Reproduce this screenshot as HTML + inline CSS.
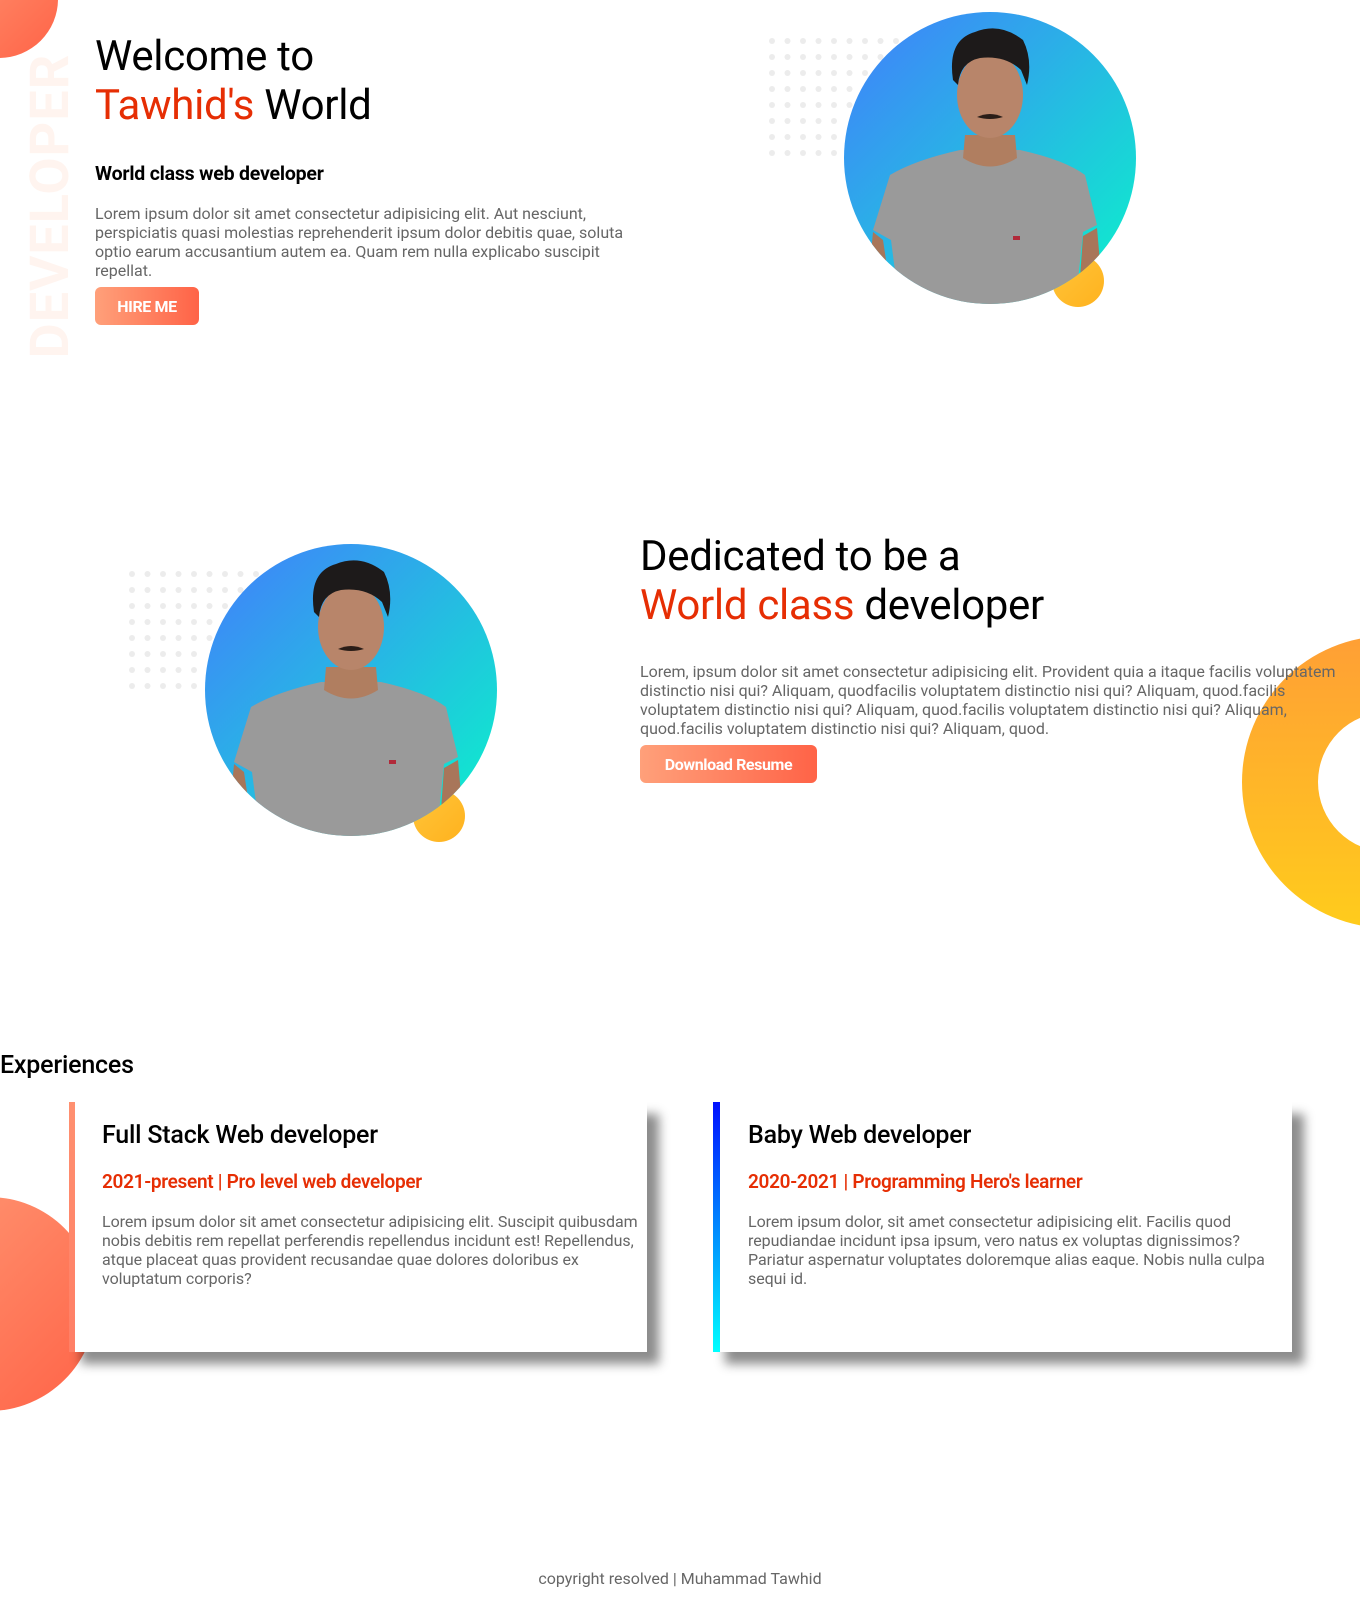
<!DOCTYPE html>
<html><head><meta charset="utf-8"><style>
*{margin:0;padding:0;box-sizing:border-box}
body{width:1360px;height:1604px;position:relative;overflow:hidden;background:#fff;font-family:"Roboto","Liberation Sans",sans-serif;color:#000}
.abs{position:absolute}
h1{font-weight:400;font-size:42px;line-height:49px;letter-spacing:-0.3px;white-space:nowrap}
.red{color:#e62e04}
p.t{color:#666;font-size:16px;line-height:19px;white-space:nowrap;letter-spacing:0}
.btn{background:linear-gradient(90deg,#ffa07a,#ff6347);color:#fff;font-weight:700;font-size:16px;border-radius:6px;display:flex;align-items:center;justify-content:center;letter-spacing:-0.4px}
.card{background:#fff;box-shadow:12px 12px 10px rgba(0,0,0,0.45)}
.card h2{font-weight:500;font-size:25px;position:absolute;left:27px;top:19px;letter-spacing:-0.2px}
.card h3{font-weight:600;font-size:19px;color:#e62e04;position:absolute;left:27px;top:68px;letter-spacing:-0.3px}
.card p{position:absolute;left:27px;top:110px;letter-spacing:-0.05px}
</style></head><body>

<div class="abs" style="left:-60px;top:-60px;width:118px;height:118px;border-radius:50%;background:linear-gradient(135deg,#ff9a76,#ff6347)"></div>
<div class="abs" style="left:-104px;top:176px;width:310px;height:60px;transform:rotate(-90deg);font-weight:700;font-size:54px;color:#fff4ef;letter-spacing:1px;line-height:60px;text-align:center">DEVELOPER</div>

<h1 class="abs" style="left:95px;top:32px">Welcome to<br><span class="red">Tawhid's</span> World</h1>
<div class="abs" style="left:95px;top:162px;font-weight:700;font-size:19.5px;letter-spacing:-0.2px">World class web developer</div>
<p class="t abs" style="left:95px;top:204px">Lorem ipsum dolor sit amet consectetur adipisicing elit. Aut nesciunt,<br>perspiciatis quasi molestias reprehenderit ipsum dolor debitis quae, soluta<br>optio earum accusantium autem ea. Quam rem nulla explicabo suscipit<br>repellat.</p>
<div class="btn abs" style="left:95px;top:287px;width:104px;height:38px">HIRE ME</div>

<!-- photo 1 -->
<svg class="abs" style="left:765px;top:0" width="400" height="320" viewBox="0 0 400 320">
<defs>
<linearGradient id="bg1" x1="0" y1="0" x2="1" y2="1"><stop offset="0.15" stop-color="#3a8ff5"/><stop offset="0.9" stop-color="#10e8cf"/></linearGradient>
<linearGradient id="yl" x1="0" y1="0" x2="1" y2="1"><stop offset="0" stop-color="#ffc53a"/><stop offset="1" stop-color="#ffb21e"/></linearGradient>
<clipPath id="c1"><circle cx="225" cy="158" r="146"/></clipPath>
</defs>
<g fill="#ececec">
<circle cx="7" cy="41" r="3"/><circle cx="22.5" cy="41" r="3"/><circle cx="38" cy="41" r="3"/><circle cx="53.5" cy="41" r="3"/><circle cx="69" cy="41" r="3"/><circle cx="84.5" cy="41" r="3"/><circle cx="100" cy="41" r="3"/><circle cx="115.5" cy="41" r="3"/><circle cx="131" cy="41" r="3"/>
<circle cx="7" cy="57" r="3"/><circle cx="22.5" cy="57" r="3"/><circle cx="38" cy="57" r="3"/><circle cx="53.5" cy="57" r="3"/><circle cx="69" cy="57" r="3"/><circle cx="84.5" cy="57" r="3"/><circle cx="100" cy="57" r="3"/><circle cx="115.5" cy="57" r="3"/>
<circle cx="7" cy="73" r="3"/><circle cx="22.5" cy="73" r="3"/><circle cx="38" cy="73" r="3"/><circle cx="53.5" cy="73" r="3"/><circle cx="69" cy="73" r="3"/><circle cx="84.5" cy="73" r="3"/><circle cx="100" cy="73" r="3"/>
<circle cx="7" cy="89" r="3"/><circle cx="22.5" cy="89" r="3"/><circle cx="38" cy="89" r="3"/><circle cx="53.5" cy="89" r="3"/><circle cx="69" cy="89" r="3"/><circle cx="84.5" cy="89" r="3"/>
<circle cx="7" cy="105" r="3"/><circle cx="22.5" cy="105" r="3"/><circle cx="38" cy="105" r="3"/><circle cx="53.5" cy="105" r="3"/><circle cx="69" cy="105" r="3"/><circle cx="84.5" cy="105" r="3"/>
<circle cx="7" cy="121" r="3"/><circle cx="22.5" cy="121" r="3"/><circle cx="38" cy="121" r="3"/><circle cx="53.5" cy="121" r="3"/><circle cx="69" cy="121" r="3"/>
<circle cx="7" cy="137" r="3"/><circle cx="22.5" cy="137" r="3"/><circle cx="38" cy="137" r="3"/><circle cx="53.5" cy="137" r="3"/><circle cx="69" cy="137" r="3"/>
<circle cx="7" cy="153" r="3"/><circle cx="22.5" cy="153" r="3"/><circle cx="38" cy="153" r="3"/><circle cx="53.5" cy="153" r="3"/><circle cx="69" cy="153" r="3"/>
</g>
<circle cx="313" cy="281" r="26" fill="url(#yl)"/>
<circle cx="225" cy="158" r="146" fill="url(#bg1)"/>
<g clip-path="url(#c1)">
<path d="M108 230 L125 175 Q150 160 195 150 L255 150 Q300 160 320 175 L332 225 L318 232 L310 310 L135 310 L126 240 Z" fill="#9a9a9a"/>
<path d="M118 240 L108 232 L100 320 L130 320 Z M318 236 L332 228 L340 320 L312 320 Z" fill="#a8765a"/>
<path d="M200 135 L250 135 L252 158 Q225 175 198 158 Z" fill="#b07e60"/>
<ellipse cx="225" cy="95" rx="33" ry="43" fill="#b8856a"/>
<path d="M188 80 Q182 40 210 32 Q235 22 258 40 Q268 60 262 85 L256 70 Q240 55 215 58 Q195 62 193 85 Z" fill="#1d1a1a"/>
<path d="M212 117 Q225 111 238 117 Q225 121 212 117Z" fill="#2a1d18"/>
<rect x="248" y="236" width="7" height="4" fill="#b12a3a"/>
</g>
</svg>

<!-- section 2 -->
<svg class="abs" style="left:125px;top:540px" width="400" height="320" viewBox="0 0 400 320">
<defs>
<linearGradient id="bg2" x1="0" y1="0" x2="1" y2="1"><stop offset="0.15" stop-color="#3a8ff5"/><stop offset="0.9" stop-color="#10e8cf"/></linearGradient>
<linearGradient id="yl2" x1="0" y1="0" x2="1" y2="1"><stop offset="0" stop-color="#ffc53a"/><stop offset="1" stop-color="#ffb21e"/></linearGradient>
<clipPath id="c2"><circle cx="226" cy="150" r="146"/></clipPath>
</defs>
<g fill="#ececec">
<circle cx="7" cy="34" r="3"/><circle cx="22.5" cy="34" r="3"/><circle cx="38" cy="34" r="3"/><circle cx="53.5" cy="34" r="3"/><circle cx="69" cy="34" r="3"/><circle cx="84.5" cy="34" r="3"/><circle cx="100" cy="34" r="3"/><circle cx="115.5" cy="34" r="3"/><circle cx="131" cy="34" r="3"/>
<circle cx="7" cy="50" r="3"/><circle cx="22.5" cy="50" r="3"/><circle cx="38" cy="50" r="3"/><circle cx="53.5" cy="50" r="3"/><circle cx="69" cy="50" r="3"/><circle cx="84.5" cy="50" r="3"/><circle cx="100" cy="50" r="3"/><circle cx="115.5" cy="50" r="3"/>
<circle cx="7" cy="66" r="3"/><circle cx="22.5" cy="66" r="3"/><circle cx="38" cy="66" r="3"/><circle cx="53.5" cy="66" r="3"/><circle cx="69" cy="66" r="3"/><circle cx="84.5" cy="66" r="3"/><circle cx="100" cy="66" r="3"/>
<circle cx="7" cy="82" r="3"/><circle cx="22.5" cy="82" r="3"/><circle cx="38" cy="82" r="3"/><circle cx="53.5" cy="82" r="3"/><circle cx="69" cy="82" r="3"/><circle cx="84.5" cy="82" r="3"/>
<circle cx="7" cy="98" r="3"/><circle cx="22.5" cy="98" r="3"/><circle cx="38" cy="98" r="3"/><circle cx="53.5" cy="98" r="3"/><circle cx="69" cy="98" r="3"/><circle cx="84.5" cy="98" r="3"/>
<circle cx="7" cy="114" r="3"/><circle cx="22.5" cy="114" r="3"/><circle cx="38" cy="114" r="3"/><circle cx="53.5" cy="114" r="3"/><circle cx="69" cy="114" r="3"/>
<circle cx="7" cy="130" r="3"/><circle cx="22.5" cy="130" r="3"/><circle cx="38" cy="130" r="3"/><circle cx="53.5" cy="130" r="3"/><circle cx="69" cy="130" r="3"/>
<circle cx="7" cy="146" r="3"/><circle cx="22.5" cy="146" r="3"/><circle cx="38" cy="146" r="3"/><circle cx="53.5" cy="146" r="3"/><circle cx="69" cy="146" r="3"/>
</g>
<circle cx="314" cy="276" r="26" fill="url(#yl2)"/>
<circle cx="226" cy="150" r="146" fill="url(#bg2)"/>
<g clip-path="url(#c2)">
<path d="M109 222 L126 167 Q151 152 196 142 L256 142 Q301 152 321 167 L333 217 L319 224 L311 302 L136 302 L127 232 Z" fill="#9a9a9a"/>
<path d="M119 232 L109 224 L101 312 L131 312 Z M319 228 L333 220 L341 312 L313 312 Z" fill="#a8765a"/>
<path d="M201 127 L251 127 L253 150 Q226 167 199 150 Z" fill="#b07e60"/>
<ellipse cx="226" cy="87" rx="33" ry="43" fill="#b8856a"/>
<path d="M189 72 Q183 32 211 24 Q236 14 259 32 Q269 52 263 77 L257 62 Q241 47 216 50 Q196 54 194 77 Z" fill="#1d1a1a"/>
<path d="M213 109 Q226 103 239 109 Q226 113 213 109Z" fill="#2a1d18"/>
<rect x="264" y="220" width="7" height="4" fill="#b12a3a"/>
</g>
</svg>

<div class="abs" style="left:1242px;top:636px;width:292px;height:292px;border-radius:50%;background:linear-gradient(180deg,#ff9f35,#ffcc1c);"></div>
<div class="abs" style="left:1318px;top:712px;width:140px;height:140px;border-radius:50%;background:#fff"></div>

<h1 class="abs" style="left:640px;top:532px">Dedicated to be a<br><span class="red">World class</span> developer</h1>
<p class="t abs" style="left:640px;top:662px">Lorem, ipsum dolor sit amet consectetur adipisicing elit. Provident quia a itaque facilis voluptatem<br>distinctio nisi qui? Aliquam, quodfacilis voluptatem distinctio nisi qui? Aliquam, quod.facilis<br>voluptatem distinctio nisi qui? Aliquam, quod.facilis voluptatem distinctio nisi qui? Aliquam,<br>quod.facilis voluptatem distinctio nisi qui? Aliquam, quod.</p>
<div class="btn abs" style="left:640px;top:745px;width:177px;height:38px">Download Resume</div>

<!-- experiences -->
<div class="abs" style="left:0;top:1051px;font-size:25px;font-weight:500;letter-spacing:-0.2px">Experiences</div>
<div class="abs" style="left:-118px;top:1197px;width:214px;height:214px;border-radius:50%;background:linear-gradient(135deg,#ff9a76,#ff6347)"></div>

<div class="abs card" style="left:69px;top:1102px;width:578px;height:250px;border-left:6px solid #ff8c6a">
<h2>Full Stack Web developer</h2>
<h3>2021-present | Pro level web developer</h3>
<p class="t">Lorem ipsum dolor sit amet consectetur adipisicing elit. Suscipit quibusdam<br>nobis debitis rem repellat perferendis repellendus incidunt est! Repellendus,<br>atque placeat quas provident recusandae quae dolores doloribus ex<br>voluptatum corporis?</p>
</div>
<div class="abs" style="left:69px;top:1102px;width:6px;height:250px;background:linear-gradient(180deg,#ff9070,#ff7f66)"></div>

<div class="abs card" style="left:713px;top:1102px;width:579px;height:250px">
<h2 style="left:35px">Baby Web developer</h2>
<h3 style="left:35px">2020-2021 | Programming Hero's learner</h3>
<p class="t" style="left:35px">Lorem ipsum dolor, sit amet consectetur adipisicing elit. Facilis quod<br>repudiandae incidunt ipsa ipsum, vero natus ex voluptas dignissimos?<br>Pariatur aspernatur voluptates doloremque alias eaque. Nobis nulla culpa<br>sequi id.</p>
</div>
<div class="abs" style="left:713px;top:1102px;width:7px;height:250px;background:linear-gradient(180deg,#0010ff,#00ffff)"></div>

<div class="abs" style="left:0;top:1569px;width:1360px;text-align:center;color:#666;font-size:16px">copyright resolved | Muhammad Tawhid</div>
</body></html>
